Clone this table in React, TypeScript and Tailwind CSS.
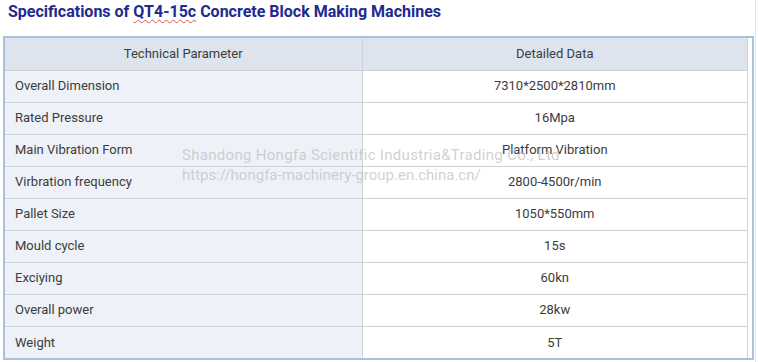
import React from "react";

const rows: [string, string][] = [
  ["Overall Dimension", "7310*2500*2810mm"],
  ["Rated Pressure", "16Mpa"],
  ["Main Vibration Form", "Platform Vibration"],
  ["Virbration frequency", "2800-4500r/min"],
  ["Pallet Size", "1050*550mm"],
  ["Mould cycle", "15s"],
  ["Exciying", "60kn"],
  ["Overall power", "28kw"],
  ["Weight", "5T"],
];

export default function App() {
  return (
    <div
      className="relative w-[758px] h-[362px] bg-white overflow-hidden"
      style={{ fontFamily: "Roboto, 'Liberation Sans', sans-serif" }}
    >
      <div className="w-[756px] h-[362px] border-r border-[#e4e4e4]">
        <div className="h-[36px] pl-[8px] pt-[1px]">
          <h1 className="text-[16px] leading-[22px] font-bold text-[#1d2a8f]">
            Specifications of{" "}
            <span className="underline decoration-wavy decoration-[#e05050] decoration-1 underline-offset-2">
              QT4-15c
            </span>{" "}
            Concrete Block Making Machines
          </h1>
        </div>
        <div className="ml-[3px] w-[751px] border-2 border-[#a9c2dc] bg-white">
          <table className="w-[743px] border-collapse text-[13px] text-[#3c3c3c]">
            <thead>
              <tr className="h-[32px] bg-[#dde4ee]">
                <th className="w-[357px] font-normal text-center border-b border-r border-[#cdd2d9]">
                  Technical Parameter
                </th>
                <th className="font-normal text-center border-b border-r border-[#cdd2d9]">
                  Detailed Data
                </th>
              </tr>
            </thead>
            <tbody>
              {rows.map(([k, v], i) => (
                <tr key={k} className="h-[32px]">
                  <td
                    className={`bg-[#eef2f8] pl-[10px] border-r border-[#cdd2d9] ${
                      i < rows.length - 1 ? "border-b" : ""
                    }`}
                  >
                    {k}
                  </td>
                  <td
                    className={`bg-white text-center border-r border-[#cdd2d9] ${
                      i < rows.length - 1 ? "border-b" : ""
                    }`}
                  >
                    {v}
                  </td>
                </tr>
              ))}
            </tbody>
          </table>
        </div>
      </div>
      <div className="absolute left-[182px] top-[145px] text-[15px] leading-[20px] text-[#bdbdbd]/70 pointer-events-none">
        <div className="tracking-[0.3px]">Shandong Hongfa Scientific Industria&amp;Trading Co., Ltd</div>
        <div>https://hongfa-machinery-group.en.china.cn/</div>
      </div>
    </div>
  );
}
